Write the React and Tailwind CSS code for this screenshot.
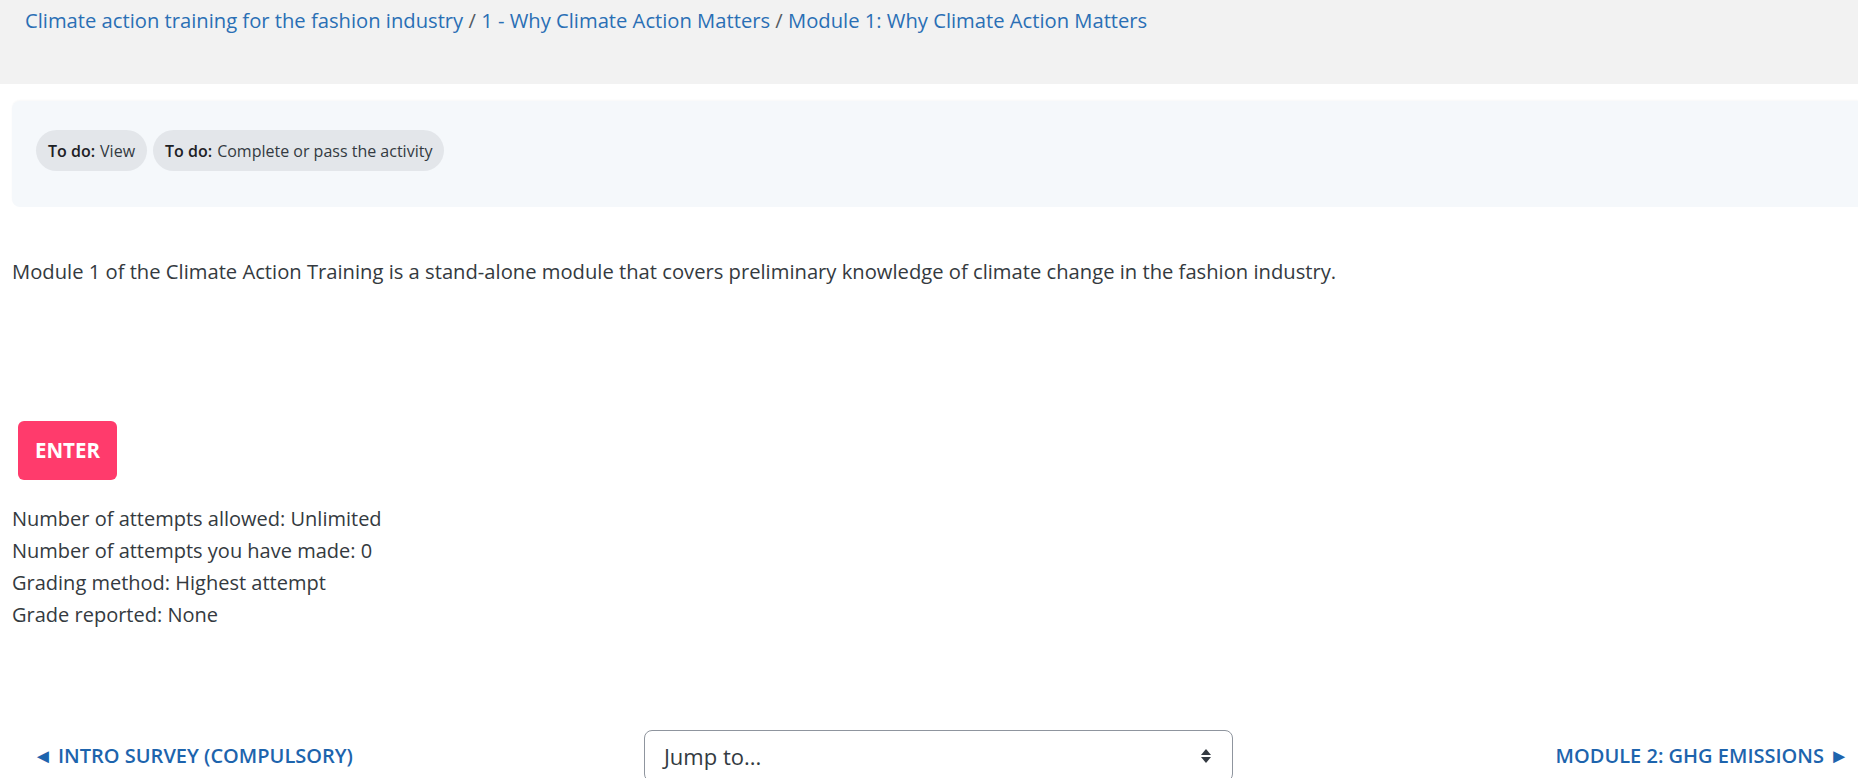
export default function App() {
  const crumbs = [
    "Climate action training for the fashion industry",
    "1 - Why Climate Action Matters",
    "Module 1: Why Climate Action Matters",
  ];

  const attempts = [
    "Number of attempts allowed: Unlimited",
    "Number of attempts you have made: 0",
    "Grading method: Highest attempt",
    "Grade reported: None",
  ];

  return (
    <div className="min-h-screen w-full overflow-hidden bg-white font-['Open_Sans',sans-serif] text-[#343a40]">
      {/* breadcrumb header */}
      <div className="h-[84px] bg-[#f2f2f2] px-[25px] pt-[6px]">
        <nav className="text-[20.2px] leading-[28px] text-[#2a6fb5]">
          {crumbs.map((c, i) => (
            <span key={i}>
              {i > 0 && <span className="text-[#555b62]"> / </span>}
              <a href="#">{c}</a>
            </span>
          ))}
        </nav>
      </div>

      {/* completion requirements */}
      <div className="ml-3 mt-[17px] h-[106px] rounded-l-lg bg-[#f5f8fb] pl-6 pt-[29px] shadow-[0_-1px_2px_rgba(0,0,0,0.03)]">
        <div className="flex gap-[6px]">
          <span className="flex h-[41px] items-center rounded-full bg-[#e3e6ea] px-3 text-[16px] text-[#333a41]">
            <b className="mr-[5px] font-semibold text-[#1d2125]">To do:</b>View
          </span>
          <span className="flex h-[41px] items-center rounded-full bg-[#e3e6ea] px-3 text-[16px] text-[#333a41]">
            <b className="mr-[5px] font-semibold text-[#1d2125]">To do:</b>Complete or pass the activity
          </span>
        </div>
      </div>

      {/* description */}
      <p className="ml-3 mt-[50px] text-[20.2px] leading-[28px]">
        Module 1 of the Climate Action Training is a stand-alone module that covers preliminary knowledge of climate change in the fashion industry.
      </p>

      <button className="ml-[18px] mt-[136px] flex h-[59px] w-[99px] items-center justify-center rounded-md bg-[#ff3b6c] text-[20.5px] font-bold text-white">
        ENTER
      </button>

      <div className="ml-3 mt-[23px] text-[20px] leading-[32px]">
        {attempts.map((a) => (
          <div key={a}>{a}</div>
        ))}
      </div>

      {/* activity navigation */}
      <div className="mt-[99px] flex items-center">
        <a href="#" className="ml-[33px] text-[20px] font-semibold text-[#1d64ad]">
          ◄ INTRO SURVEY (COMPULSORY)
        </a>
        <div className="ml-[291px] flex h-[52px] w-[589px] items-center justify-between rounded-lg border border-[#8f959e] pl-[19px] pr-[20px] text-[22px] text-[#333a41]">
          <span>Jump to...</span>
          <svg width="12" height="16" viewBox="0 0 12 16" className="fill-[#333a41]">
            <path d="M6 1 L11 7 H1 Z" />
            <path d="M6 15 L11 9 H1 Z" />
          </svg>
        </div>
        <a href="#" className="ml-auto mr-[9px] text-[20px] font-semibold text-[#1d64ad]">
          MODULE 2: GHG EMISSIONS ►
        </a>
      </div>
    </div>
  );
}
